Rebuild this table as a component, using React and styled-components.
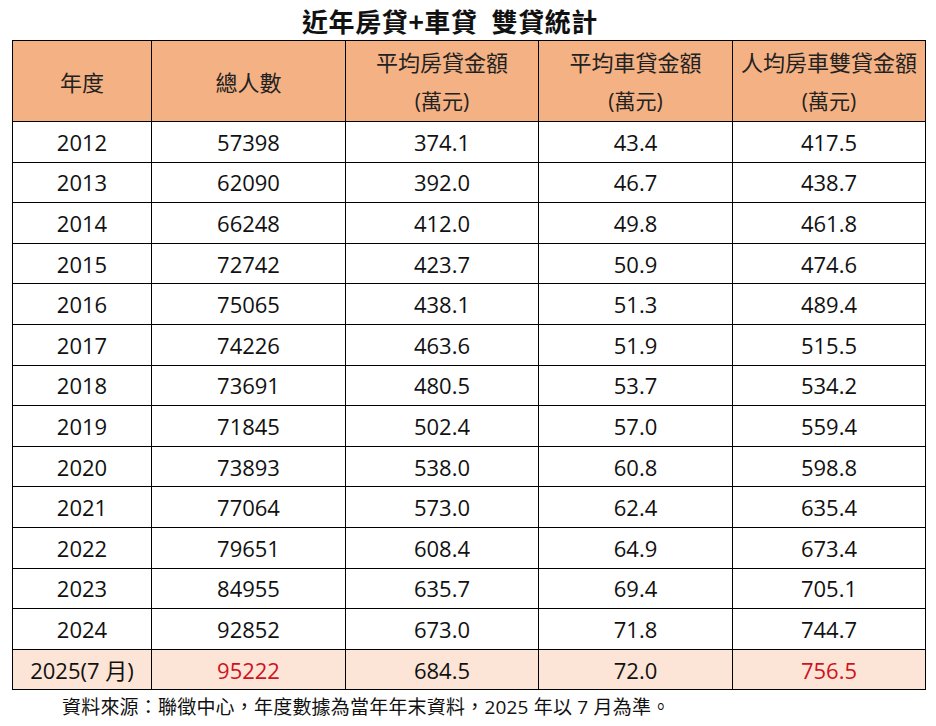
import React from "react";
import styled, { createGlobalStyle } from "styled-components";

const Global = createGlobalStyle`
  html, body { margin: 0; padding: 0; background: #fff; }
  body { font-family: "Open Sans", "Noto Sans CJK TC", sans-serif; color: #111; }
`;

const Page = styled.div`
  width: 936px;
  height: 726px;
  padding: 0 11px 0 12px;
  box-sizing: border-box;
  overflow: hidden;
`;

const Title = styled.h1`
  margin: 0;
  height: 40px;
  display: flex;
  align-items: center;
  justify-content: center;
  padding-right: 37px;
  font-size: 26px;
  font-weight: 700;
  letter-spacing: 0.6px;
  font-family: "Noto Sans CJK TC", "Open Sans", sans-serif;
  color: #111;
`;

const TitleGap = styled.span`
  display: inline-block;
  width: 14px;
`;

const Table = styled.table`
  border-collapse: collapse;
  width: 913px;
  table-layout: fixed;
  font-size: 22px;
`;

const HeadCell = styled.th`
  background: #f4b183;
  border: 1px solid #000;
  font-weight: 400;
  color: #222;
  padding: 0;
  text-align: center;
  vertical-align: middle;
  font-family: "Noto Sans CJK TC", sans-serif;
  font-size: 22px;
  line-height: 40px;
  height: 80px;
`;

const Unit = styled.span`
  display: block;
  font-family: "Open Sans", "Noto Sans CJK TC", sans-serif;
  font-size: 21px;
`;

const Row = styled.tr`
  height: 40.6px;
  background: ${(p) => (p.$highlight ? "#fce4d6" : "#fff")};
`;

const Cell = styled.td`
  border: 1px solid #000;
  padding: 0;
  text-align: center;
  vertical-align: middle;
  line-height: 38px;
  color: ${(p) => (p.$red ? "#d0121e" : "#111")};
`;

const Month = styled.span`
  font-family: "Open Sans", "Noto Sans CJK TC", sans-serif;
`;

const Note = styled.p`
  margin: 5px 0 0 50px;
  font-size: 19px;
  line-height: 24px;
  color: #111;
  font-family: "Open Sans", "Noto Sans CJK TC", sans-serif;
  letter-spacing: 0.2px;
`;

const rows = [
  ["2012", "57398", "374.1", "43.4", "417.5"],
  ["2013", "62090", "392.0", "46.7", "438.7"],
  ["2014", "66248", "412.0", "49.8", "461.8"],
  ["2015", "72742", "423.7", "50.9", "474.6"],
  ["2016", "75065", "438.1", "51.3", "489.4"],
  ["2017", "74226", "463.6", "51.9", "515.5"],
  ["2018", "73691", "480.5", "53.7", "534.2"],
  ["2019", "71845", "502.4", "57.0", "559.4"],
  ["2020", "73893", "538.0", "60.8", "598.8"],
  ["2021", "77064", "573.0", "62.4", "635.4"],
  ["2022", "79651", "608.4", "64.9", "673.4"],
  ["2023", "84955", "635.7", "69.4", "705.1"],
  ["2024", "92852", "673.0", "71.8", "744.7"],
];

export default function App() {
  return (
    <Page>
      <Global />
      <Title>
        近年房貸+車貸<TitleGap />雙貸統計
      </Title>
      <Table>
        <colgroup>
          <col style={{ width: 139 }} />
          <col style={{ width: 194 }} />
          <col style={{ width: 193 }} />
          <col style={{ width: 194 }} />
          <col style={{ width: 193 }} />
        </colgroup>
        <thead>
          <tr>
            <HeadCell>年度</HeadCell>
            <HeadCell>總人數</HeadCell>
            <HeadCell>
              平均房貸金額<Unit>(萬元)</Unit>
            </HeadCell>
            <HeadCell>
              平均車貸金額<Unit>(萬元)</Unit>
            </HeadCell>
            <HeadCell>
              人均房車雙貸金額<Unit>(萬元)</Unit>
            </HeadCell>
          </tr>
        </thead>
        <tbody>
          {rows.map((r) => (
            <Row key={r[0]}>
              {r.map((v, i) => (
                <Cell key={i}>{v}</Cell>
              ))}
            </Row>
          ))}
          <Row $highlight>
            <Cell>
              <Month>2025(7 月)</Month>
            </Cell>
            <Cell $red>95222</Cell>
            <Cell>684.5</Cell>
            <Cell>72.0</Cell>
            <Cell $red>756.5</Cell>
          </Row>
        </tbody>
      </Table>
      <Note>資料來源：聯徵中心，年度數據為當年年末資料，2025 年以 7 月為準。</Note>
    </Page>
  );
}
